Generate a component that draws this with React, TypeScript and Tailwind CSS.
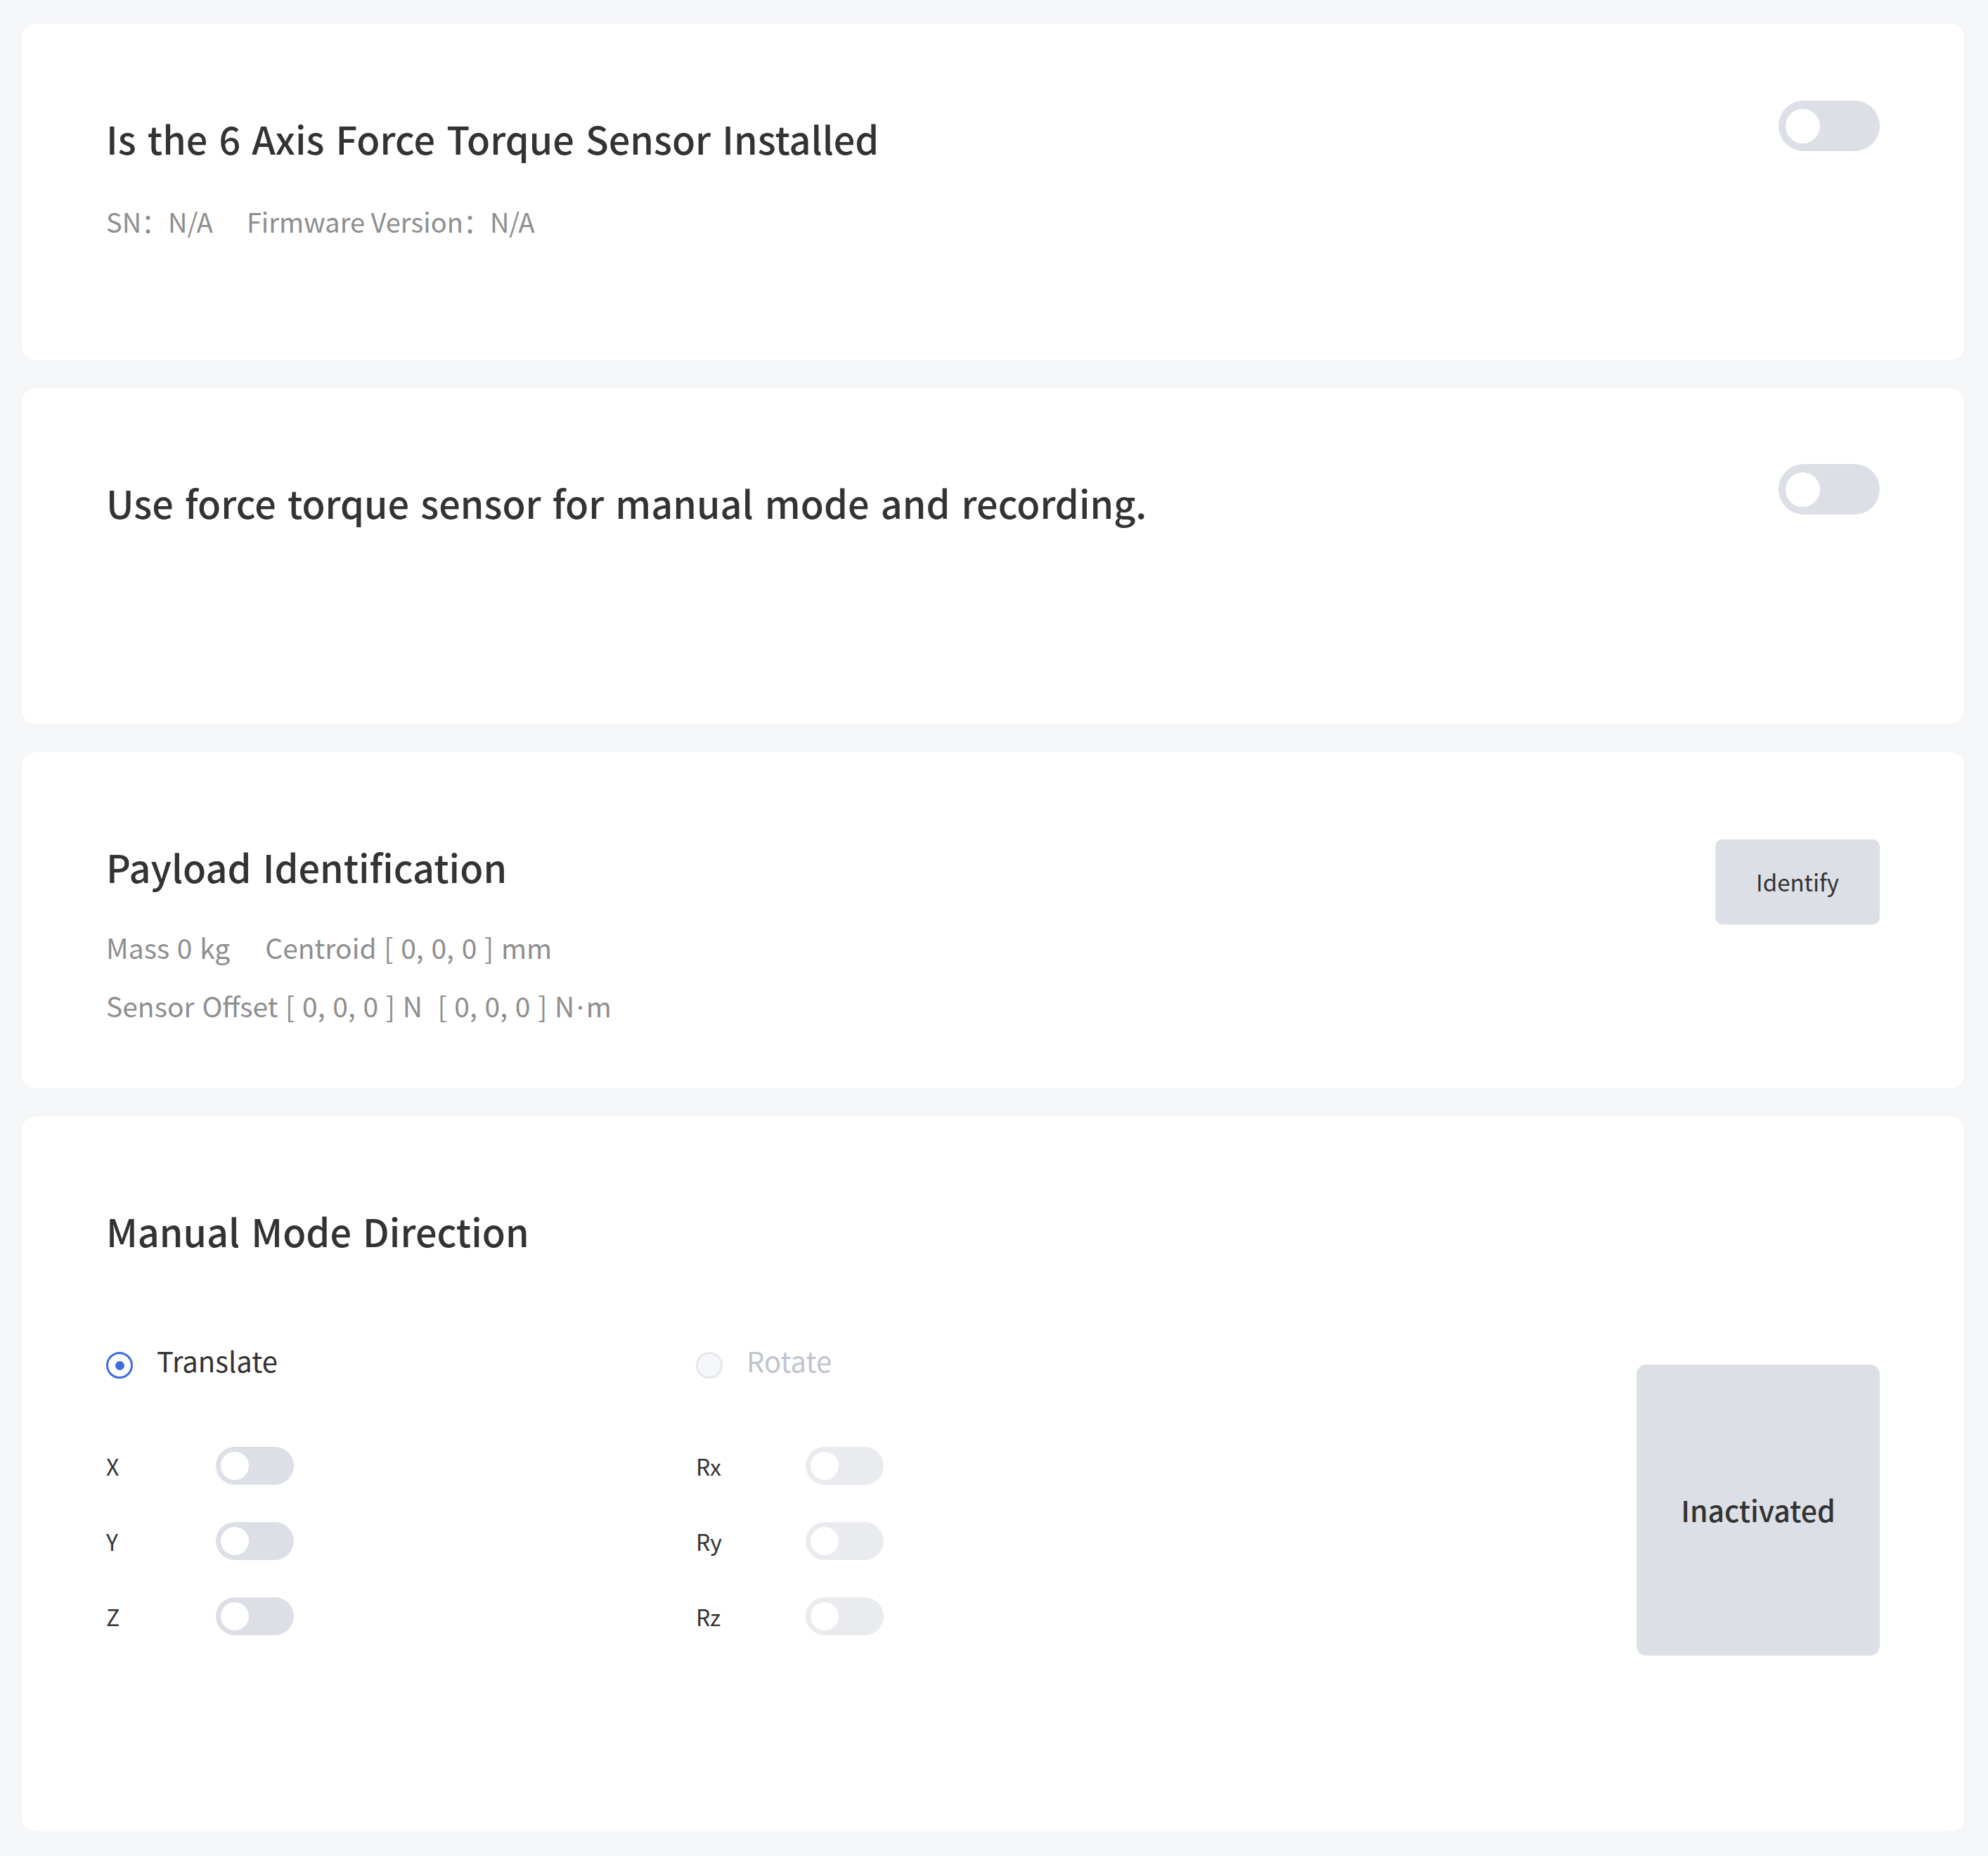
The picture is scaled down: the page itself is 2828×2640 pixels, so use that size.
import React from 'react';

type ToggleProps = { small?: boolean; disabled?: boolean };

function Toggle({ small, disabled }: ToggleProps) {
    if (small) {
        return (
            <div className={`w-[111px] h-[54px] rounded-full bg-[#dcdfe6] flex items-center pl-[7px] shrink-0 ${disabled ? 'opacity-60' : ''}`}>
                <div className="w-[40px] h-[40px] rounded-full bg-white" />
            </div>
        );
    }
    return (
        <div className="w-[144px] h-[72px] rounded-full bg-[#dcdfe6] flex items-center pl-[10px] shrink-0">
            <div className="w-[49px] h-[49px] rounded-full bg-white" />
        </div>
    );
}

function Radio({ label, checked }: { label: string; checked?: boolean }) {
    return (
        <div className="flex items-center h-[58px] gap-[34px]">
            {checked ? (
                <div className="w-[38px] h-[38px] rounded-full border-[3px] border-[#3d6ce3] bg-white flex items-center justify-center">
                    <div className="w-[13px] h-[13px] rounded-full bg-[#3d6ce3]" />
                </div>
            ) : (
                <div className="w-[38px] h-[38px] rounded-full border-[3px] border-[#e6e8ed] bg-[#f5f7fa]" />
            )}
            <span className={`text-[40px] leading-[58px] -mt-[14px] ${checked ? 'text-[#333333]' : 'text-[#c0c4cc]'}`}>{label}</span>
        </div>
    );
}

function AxisRow({ axis, disabled }: { axis: string; disabled?: boolean }) {
    return (
        <div className="flex items-center h-[107px]">
            <span className="w-[156px] text-[32px] text-[#333333]">{axis}</span>
            <Toggle small disabled={disabled} />
        </div>
    );
}

export default function App() {
    const card = 'bg-white rounded-[20px] px-[120px] pt-[124px]';
    const title = 'text-[54px] leading-[78px] font-medium text-[#333333] whitespace-nowrap [word-spacing:4px]';
    const meta = 'text-[39px] leading-[56px] text-[#8e8e8e] whitespace-nowrap [word-spacing:2px]';

    return (
        <div
            className="min-h-screen bg-[#f5f6f8] pl-[31px] pr-[34px] pt-[34px] pb-[36px] flex flex-col gap-[40px]"
            style={{ fontFamily: '"Noto Sans CJK SC", "Noto Sans", sans-serif' }}
        >
            {/* Sensor installed */}
            <div className={`${card} h-[478px] flex justify-between items-start`}>
                <div>
                    <h2 className={title}>Is the 6 Axis Force Torque Sensor Installed</h2>
                    <p className="text-[38px] leading-[56px] text-[#8e8e8e] whitespace-nowrap mt-[51px]">
                        SN：N/A<span className="inline-block w-[48px]" />Firmware Version：N/A
                    </p>
                </div>
                <div className="-mt-[15px]">
                    <Toggle />
                </div>
            </div>

            {/* Manual mode */}
            <div className={`${card} h-[478px] flex justify-between items-start`}>
                <h2 className={title}>Use force torque sensor for manual mode and recording.</h2>
                <div className="-mt-[16px]">
                    <Toggle />
                </div>
            </div>

            {/* Payload */}
            <div className={`${card} h-[478px] flex justify-between items-start`}>
                <div>
                    <h2 className={title}>Payload Identification</h2>
                    <p className={`${meta} mt-[47px]`}>
                        Mass 0 kg<span className="inline-block w-[50px]" />Centroid [ 0, 0, 0 ] mm
                    </p>
                    <p className={`${meta} mt-[27px]`}>
                        Sensor Offset [ 0, 0, 0 ] N&nbsp;&nbsp;[ 0, 0, 0 ] N
                        <span className="px-[3px]" style={{ fontFamily: '"Noto Sans", sans-serif' }}>·</span>m
                    </p>
                </div>
                <button className="w-[234px] h-[121px] rounded-[10px] bg-[#dcdfe6] text-[33px] text-[#333333] flex items-center justify-center">
                    Identify
                </button>
            </div>

            {/* Direction */}
            <div className={`${card} h-[1017px]`}>
                <h2 className={title}>Manual Mode Direction</h2>
                <div className="flex items-start mt-[123px]">
                    <div className="w-[839px]">
                        <Radio label="Translate" checked />
                        <div className="mt-[60px]">
                            {['X', 'Y', 'Z'].map(a => (
                                <AxisRow key={a} axis={a} />
                            ))}
                        </div>
                    </div>
                    <div className="w-[839px]">
                        <Radio label="Rotate" />
                        <div className="mt-[60px]">
                            {['Rx', 'Ry', 'Rz'].map(a => (
                                <AxisRow key={a} axis={a} disabled />
                            ))}
                        </div>
                    </div>
                    <button className="ml-auto mt-[28px] w-[346px] h-[414px] rounded-[14px] bg-[#dcdfe6] text-[41px] font-medium text-[#333333] flex items-center justify-center">
                        Inactivated
                    </button>
                </div>
            </div>
        </div>
    );
}
